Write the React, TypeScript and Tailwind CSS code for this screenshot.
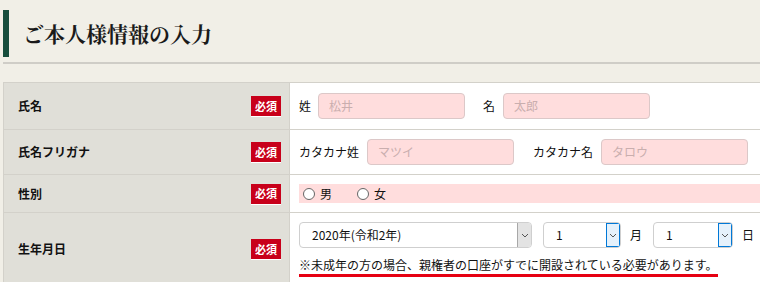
import { ReactNode } from "react";

const FONT = { fontFamily: '"Noto Sans CJK JP", "Noto Sans", sans-serif' };

function Badge() {
  return (
    <span className="inline-flex h-[20px] w-[30px] items-center justify-center bg-[#c8001a] text-[11px] font-bold leading-none text-white shadow-[0_1px_0_#ffffff]">
      必須
    </span>
  );
}

function Row({
  label,
  height,
  children,
  last,
}: {
  label: string;
  height: string;
  children: ReactNode;
  last?: boolean;
}) {
  return (
    <div className={`flex ${height} ${last ? "" : "border-b border-[#d3d1ca]"}`}>
      <div className="flex w-[286px] shrink-0 items-center justify-between border-r border-[#d3d1ca] bg-[#e0dfd8] pl-[14px] pr-[8px]">
        <span className="text-[12px] font-bold text-[#111]">{label}</span>
        <Badge />
      </div>
      <div className="flex flex-1 items-center bg-white pl-[9px]">{children}</div>
    </div>
  );
}

function TextBox({ placeholder, width }: { placeholder: string; width: string }) {
  return (
    <div
      className={`flex h-[26px] ${width} items-center rounded-[4px] border border-[#dcc8c8] bg-[#ffdddd] pl-[10px] text-[12px] text-[#c9aeae]`}
    >
      {placeholder}
    </div>
  );
}

function Chevron() {
  return (
    <svg width="8" height="5" viewBox="0 0 8 5" fill="none">
      <path d="M1 1l3 3 3-3" stroke="#555" strokeWidth="1" />
    </svg>
  );
}

function SelectBox({
  value,
  width,
  focused,
}: {
  value: string;
  width: string;
  focused?: boolean;
}) {
  return (
    <div
      className={`flex h-[26px] ${width} items-stretch overflow-hidden rounded-[4px] border border-[#cfcfcf] bg-white`}
    >
      <div className="flex flex-1 items-center pl-[12px] text-[12px] text-[#111]">{value}</div>
      <div
        className={`flex w-[14px] items-center justify-center border-l ${
          focused ? "border-[#0078d7] bg-[#e5f1fb] border-r border-y" : "border-[#a8a8a8] bg-[#e3e3e3]"
        }`}
      >
        <Chevron />
      </div>
    </div>
  );
}

function Radio({ label }: { label: string }) {
  return (
    <span className="flex items-center gap-[5px]">
      <span className="h-[12px] w-[12px] rounded-full border border-[#666] bg-white" />
      <span className="text-[12px] text-[#111]">{label}</span>
    </span>
  );
}

export default function App() {
  return (
    <div className="h-[282px] w-full overflow-hidden bg-[#f1efe7]" style={FONT}>
      <div className="pl-[3px] pt-[10px]">
        <div className="flex h-[47px] items-center border-l-[6px] border-[#164d3c] pl-[14px]">
          <h1
            className="text-[21px] font-bold text-[#1a1a1a]"
            style={{ fontFamily: '"Noto Serif CJK JP", "Noto Sans CJK JP", serif' }}
          >
            ご本人様情報の入力
          </h1>
        </div>
        <div className="mt-[5px] h-[2px] w-[800px] bg-[#cfcdc7]" />
      </div>

      <div className="ml-[3px] mt-[18px] w-[800px] border-l border-t border-[#d3d1ca]">
        <Row label="氏名" height="h-[47px]">
          <span className="mr-[7px] text-[12px] text-[#111]">姓</span>
          <TextBox placeholder="松井" width="w-[147px]" />
          <span className="ml-[18px] mr-[8px] text-[12px] text-[#111]">名</span>
          <TextBox placeholder="太郎" width="w-[147px]" />
        </Row>
        <Row label="氏名フリガナ" height="h-[45px]">
          <span className="mr-[8px] text-[12px] text-[#111]">カタカナ姓</span>
          <TextBox placeholder="マツイ" width="w-[147px]" />
          <span className="ml-[19px] mr-[8px] text-[12px] text-[#111]">カタカナ名</span>
          <TextBox placeholder="タロウ" width="w-[147px]" />
        </Row>
        <Row label="性別" height="h-[38px]">
          <div className="flex h-[19px] flex-1 items-center gap-[25px] bg-[#ffdddd] pl-[4px]">
            <Radio label="男" />
            <Radio label="女" />
          </div>
        </Row>
        <Row label="生年月日" height="h-[72px]" last>
          <div className="flex flex-col self-start pt-[9px]">
            <div className="flex items-center">
              <SelectBox value="2020年(令和2年)" width="w-[233px]" />
              <div className="ml-[11px]">
                <SelectBox value="1" width="w-[78px]" focused />
              </div>
              <span className="ml-[9px] text-[12px] text-[#111]">月</span>
              <div className="ml-[11px]">
                <SelectBox value="1" width="w-[80px]" focused />
              </div>
              <span className="ml-[9px] text-[12px] text-[#111]">日</span>
            </div>
            <div className="mt-[9px] self-start border-b-[3px] border-[#e60012] pb-[1px] text-[12px] leading-[16px] text-[#111]">
              ※未成年の方の場合、親権者の口座がすでに開設されている必要があります。
            </div>
          </div>
        </Row>
      </div>
    </div>
  );
}
